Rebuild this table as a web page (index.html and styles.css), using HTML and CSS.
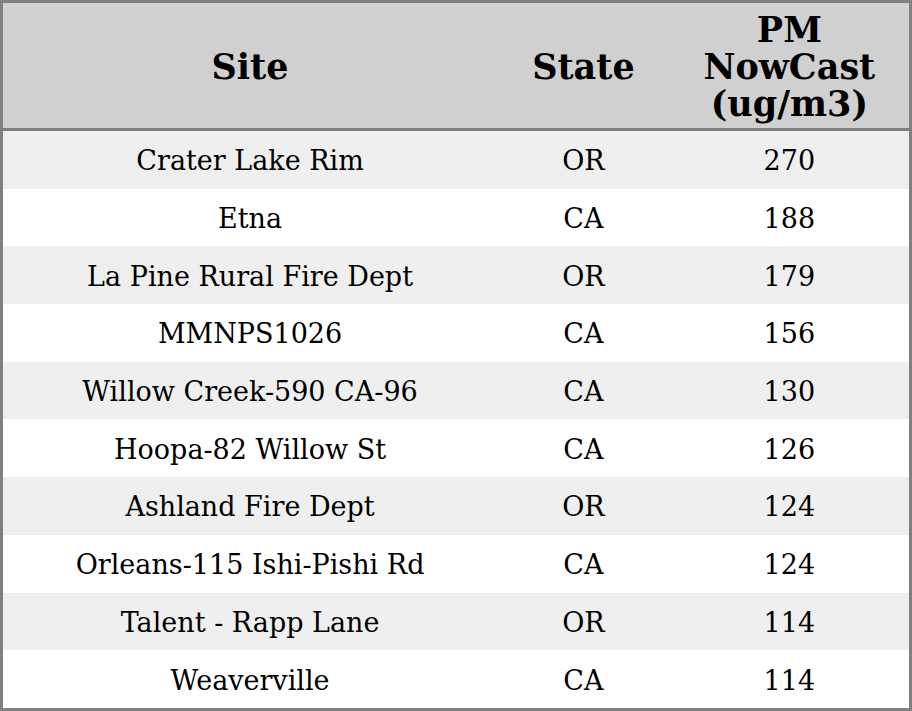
FILE: index.html
```html
<!DOCTYPE html>
<html>
<head>
<meta charset="utf-8">
<link rel="stylesheet" href="styles.css">
</head>
<body>
<table class="aq">
  <colgroup>
    <col class="c-site">
    <col class="c-state">
    <col class="c-pm">
  </colgroup>
  <thead>
    <tr><th>Site</th><th>State</th><th>PM<br>NowCast<br>(ug/m3)</th></tr>
  </thead>
  <tbody>
    <tr><td>Crater Lake Rim</td><td>OR</td><td>270</td></tr>
    <tr><td>Etna</td><td>CA</td><td>188</td></tr>
    <tr><td>La Pine Rural Fire Dept</td><td>OR</td><td>179</td></tr>
    <tr><td>MMNPS1026</td><td>CA</td><td>156</td></tr>
    <tr><td>Willow Creek-590 CA-96</td><td>CA</td><td>130</td></tr>
    <tr><td>Hoopa-82 Willow St</td><td>CA</td><td>126</td></tr>
    <tr><td>Ashland Fire Dept</td><td>OR</td><td>124</td></tr>
    <tr><td>Orleans-115 Ishi-Pishi Rd</td><td>CA</td><td>124</td></tr>
    <tr><td>Talent - Rapp Lane</td><td>OR</td><td>114</td></tr>
    <tr><td>Weaverville</td><td>CA</td><td>114</td></tr>
  </tbody>
</table>
</body>
</html>
```
FILE: styles.css
```css
html, body {
  margin: 0;
  padding: 0;
  background: #ffffff;
}
.aq {
  width: 912px;
  height: 711px;
  border-collapse: collapse;
  border: 3px solid #808080;
  font-family: "DejaVu Serif", serif;
  color: #000;
  table-layout: fixed;
}
.c-site { width: 494px; }
.c-state { width: 172px; }
.c-pm { width: 240px; }
.aq th {
  background: #d0d0d0;
  font-size: 35px;
  line-height: 37px;
  font-weight: bold;
  text-align: center;
  height: 124px;
  padding: 1px 0 0;
  border-bottom: 3px solid #808080;
}
.aq td {
  font-size: 27px;
  line-height: 31px;
  text-align: center;
  padding: 2px 0 0;
  height: 55.7px;
}
.aq tbody tr:nth-child(odd) td { background: #efefef; }
.aq tbody tr:nth-child(even) td { background: #ffffff; }
```
